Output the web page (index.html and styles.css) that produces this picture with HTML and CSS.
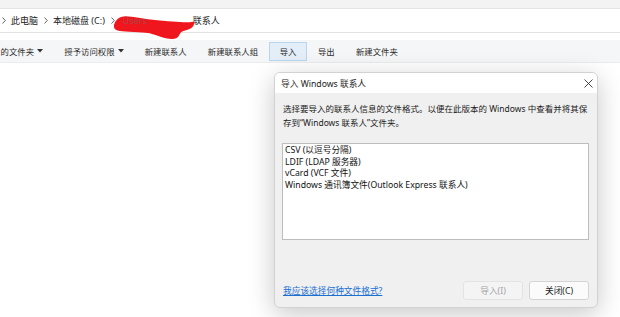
FILE: index.html
```html
<!DOCTYPE html>
<html lang="zh-CN">
<head>
    <meta charset="UTF-8">
    <title>联系人</title>
    <link rel="stylesheet" href="styles.css">
</head>
<body>
    <div class="explorer">
        <div class="tabstrip"></div>
        <div class="address">
            <svg class="chev" width="4" height="7" viewBox="0 0 4 7"><path d="M0.5 0.5 L3.3 3.5 L0.5 6.5" fill="none" stroke="#555" stroke-width="0.9"/></svg>
            <span class="crumb">此电脑</span>
            <svg class="chev" width="4" height="7" viewBox="0 0 4 7"><path d="M0.5 0.5 L3.3 3.5 L0.5 6.5" fill="none" stroke="#555" stroke-width="0.9"/></svg>
            <span class="crumb">本地磁盘 (C:)</span>
            <svg class="chev" width="4" height="7" viewBox="0 0 4 7"><path d="M0.5 0.5 L3.3 3.5 L0.5 6.5" fill="none" stroke="#555" stroke-width="0.9"/></svg>
            <span class="crumb hidden-name">Users</span>
            <span class="crumb">联系人</span>
            <svg class="scribble" width="84" height="26" viewBox="0 0 84 26">
                <path d="M4 6 C8 2 14 3 26 5 S50 8 66 9 S79 7 79 10 S76 14 69 16 S67 24 58 24 S42 19 34 18 S14 17 6 16 S1 9 4 6 Z" fill="#f0161d" stroke="#f0161d" stroke-width="2" stroke-linejoin="round"/>
            </svg>
        </div>
        <div class="gap"></div>
        <div class="toolbar">
            <div class="tools">
                <span class="tool">的文件夹<svg class="caret" width="6" height="4" viewBox="0 0 6 4"><path d="M0 0 H6 L3 3.5 Z" fill="#333"/></svg></span>
                <span class="tool">授予访问权限<svg class="caret" width="6" height="4" viewBox="0 0 6 4"><path d="M0 0 H6 L3 3.5 Z" fill="#333"/></svg></span>
                <span class="tool">新建联系人</span>
                <span class="tool">新建联系人组</span>
                <span class="tool active">导入</span>
                <span class="tool">导出</span>
                <span class="tool">新建文件夹</span>
            </div>
        </div>
        <div class="content"></div>
    </div>

    <div class="dialog">
        <div class="dialog-title">
            <span>导入 Windows 联系人</span>
            <svg class="close" width="9" height="9" viewBox="0 0 9 9"><path d="M0.5 0.5 L8.5 8.5 M8.5 0.5 L0.5 8.5" stroke="#333" stroke-width="0.9"/></svg>
        </div>
        <div class="dialog-body">
            <p class="desc">选择要导入的联系人信息的文件格式。以便在此版本的 Windows 中查看并将其保<br>存到“Windows 联系人”文件夹。</p>
            <ul class="formats">
                <li>CSV (以逗号分隔)</li>
                <li>LDIF (LDAP 服务器)</li>
                <li>vCard (VCF 文件)</li>
                <li>Windows 通讯簿文件(Outlook Express 联系人)</li>
            </ul>
            <div class="dialog-footer">
                <a class="help" href="#">我应该选择何种文件格式?</a>
                <button class="btn" disabled>导入(I)</button>
                <button class="btn">关闭(C)</button>
            </div>
        </div>
    </div>
</body>
</html>
```

FILE: styles.css
```css
html, body {
    margin: 0;
    padding: 0;
    width: 620px;
    height: 317px;
    overflow: hidden;
    background: #fff;
    font-family: "Noto Sans", "Noto Sans CJK SC", sans-serif;
    color: #1b1b1b;
}

.explorer {
    display: flex;
    flex-direction: column;
    height: 317px;
}

.tabstrip {
    height: 8px;
    background: #f3f3f3;
    border-bottom: 1px solid #e4e4e4;
}

.address {
    position: relative;
    height: 23px;
    display: flex;
    align-items: center;
    padding-left: 2px;
    border-bottom: 1px solid #e2e2e2;
    font-size: 9px;
    color: #222;
}

.chev {
    margin: 0 5px 0 0;
}

.crumb {
    margin-right: 6px;
    white-space: nowrap;
}

.hidden-name {
    position: relative;
    z-index: 1;
    color: rgba(110, 110, 110, 0.55);
    width: 70px;
    margin-left: 3px;
    margin-right: 0;
}

/* covers the user name */
.scribble {
    position: absolute;
    left: 114px;
    top: 5px;
}

.gap {
    height: 7px;
}

.toolbar {
    height: 22px;
    background: #f5f6f7;
    border-bottom: 1px solid #ececec;
    display: flex;
    align-items: center;
    font-size: 8.4px;
    color: #2b2b2b;
}

.tools {
    display: flex;
    align-items: center;
    margin-left: -10px;
}

.tool {
    display: flex;
    align-items: center;
    height: 17px;
    padding: 0 9.6px;
    border: 1px solid transparent;
    white-space: nowrap;
}

.tool.active {
    background: #e3eef8;
    border-color: #b9d5ee;
    padding: 0 10px;
}

.caret {
    margin-left: 3px;
}

.content {
    flex: 1;
}

/* dialog floats over the window */
.dialog {
    position: absolute;
    left: 274px;
    top: 72px;
    width: 324px;
    height: 236px;
    box-sizing: border-box;
    border: 1px solid #d2d2d2;
    border-radius: 6px;
    background: #f0f0f0;
    box-shadow: 0 6px 26px rgba(0, 0, 0, 0.22);
    display: flex;
    flex-direction: column;
    overflow: hidden;
    font-size: 8.6px;
}

.dialog-title {
    height: 20px;
    background: #fff;
    display: flex;
    align-items: center;
    justify-content: space-between;
    padding: 0 4px 0 6px;
    flex-shrink: 0;
    font-size: 8.7px;
}

.dialog-body {
    flex: 1;
    display: flex;
    flex-direction: column;
    padding: 9px 8px 7px 7px;
}

.desc {
    margin: 0 -8px 0 0;
    line-height: 14px;
    font-size: 8.5px;
    white-space: nowrap;
    padding: 0 0 0 1px;
}

.formats {
    list-style: none;
    margin: 13px 0 0 0;
    padding: 1px 2px;
    height: 97px;
    box-sizing: border-box;
    background: #fff;
    border: 1px solid #bdbdbd;
    line-height: 11.7px;
    font-size: 8.7px;
    color: #111;
}

.dialog-footer {
    margin-top: auto;
    display: flex;
    align-items: center;
    font-size: 8.7px;
}

.help {
    color: #1a6fd1;
    text-decoration: underline;
    margin-right: auto;
    padding-left: 1px;
}

.btn {
    width: 60px;
    height: 19px;
    margin-left: 6px;
    font: inherit;
    color: #1b1b1b;
    background: #fbfbfb;
    border: 1px solid #d4d4d4;
    border-radius: 3px;
    padding: 0;
}

.btn:disabled {
    color: #a3a3a3;
    background: #f4f4f4;
    border-color: #e3e3e3;
}
```
